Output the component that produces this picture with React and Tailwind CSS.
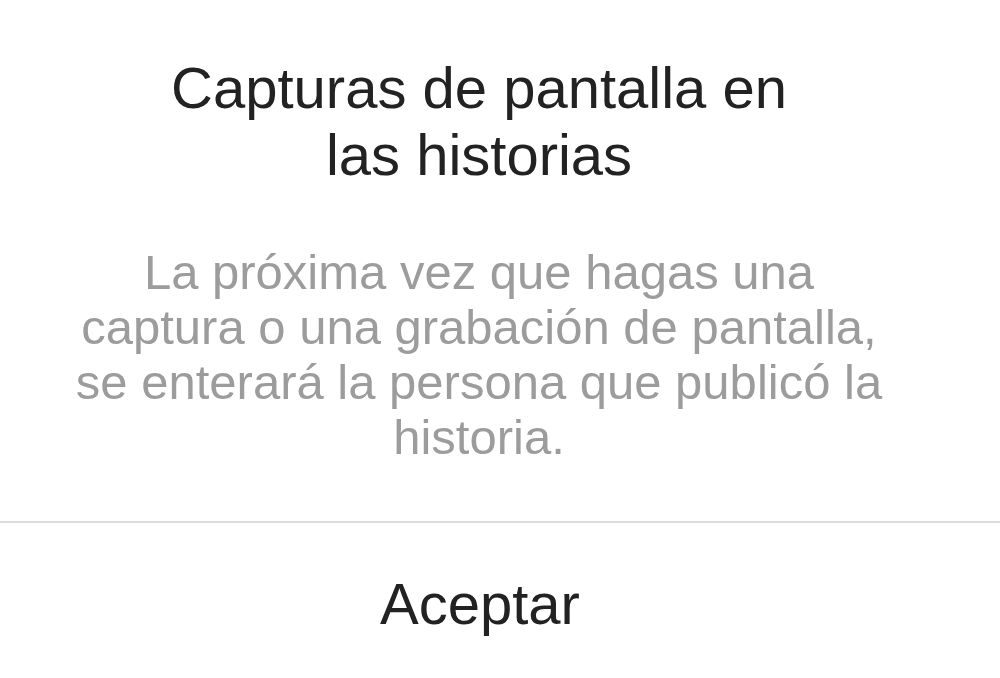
import React from 'react';

const AvisoCaptura = () => {
  return (
    <div className="w-[1000px] h-[678px] bg-white overflow-hidden flex flex-col font-['Liberation_Sans',Arial,sans-serif]">
      <h1 className="pt-[54px] pr-[42px] text-[58px] leading-[67px] text-[#222222] text-center font-normal">
        Capturas de pantalla en
        <br />
        las historias
      </h1>

      <p className="mt-[57px] pr-[42px] text-[49px] leading-[55px] text-[#9c9c9c] text-center">
        La próxima vez que hagas una
        <br />
        captura o una grabación de pantalla,
        <br />
        se enterará la persona que publicó la
        <br />
        historia.
      </p>

      <div className="mt-[56px] w-full h-[2px] bg-[#dcdcdc]" />

      <button className="w-full h-[160px] pt-[6px] pr-[40px] text-[58px] text-[#222222] text-center">
        Aceptar
      </button>
    </div>
  );
};

export default AvisoCaptura;
